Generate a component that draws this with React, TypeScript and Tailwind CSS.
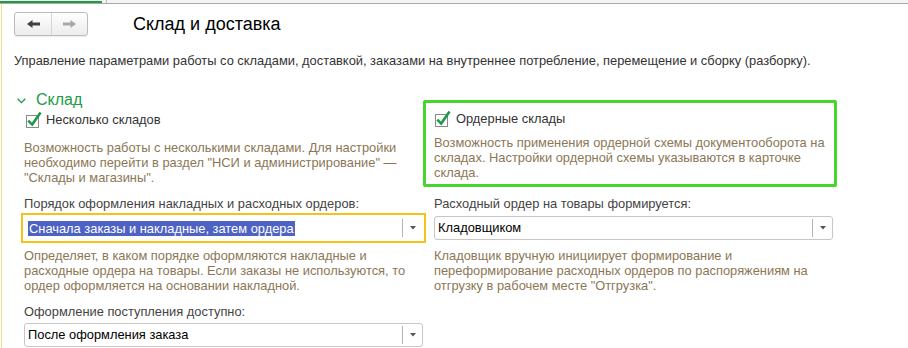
import React from "react";

const Arrow = ({ color, flip }: { color: string; flip?: boolean }) => (
  <svg width="13" height="8" viewBox="0 0 13 8" style={{ transform: flip ? "scaleX(-1)" : undefined }}>
    <path d="M0 4 L5.5 0 L5.5 2.5 L13 2.5 L13 5.5 L5.5 5.5 L5.5 8 Z" fill={color} />
  </svg>
);

const Check = () => (
  <svg width="16" height="17" viewBox="0 0 16 17" className="shrink-0">
    <rect x="0.5" y="3.5" width="12" height="12" fill="#fff" stroke="#8a8a8a" />
    <path d="M3.2 9.6 L6.2 12.6 L13.8 1.6" fill="none" stroke="#1a9a46" strokeWidth="2.6" strokeLinecap="square" />
  </svg>
);

const DropArrow = () => (
  <svg width="6" height="4" viewBox="0 0 6 4">
    <path d="M0 0 L6 0 L3 3.5 Z" fill="#555" />
  </svg>
);

const Field = ({ children, focused }: { children: React.ReactNode; focused?: boolean }) => {
  const inner = (
    <div
      className={
        "flex h-[24px] w-[399px] items-stretch rounded-[3px] border bg-white " +
        (focused ? "border-white" : "border-[#c6c6c6]")
      }
    >
      <div className="flex flex-1 items-center pl-[3px] text-black">{children}</div>
      <div className="my-[2px] w-px bg-[#b4b4b4]" />
      <div className="flex w-[19px] items-center justify-center">
        <DropArrow />
      </div>
    </div>
  );
  if (!focused) return inner;
  return <div className="-m-[3px] w-[405px] border-2 border-[#f5c21b] p-px">{inner}</div>;
};

const Desc = ({ lines }: { lines: string[] }) => (
  <div className="leading-[15px] text-[#8b7755] whitespace-nowrap">
    {lines.map((l, i) => (
      <div key={i}>{l}</div>
    ))}
  </div>
);

export default function App() {
  return (
    <div className="flex h-[348px] w-[908px] flex-col overflow-hidden bg-white font-['Liberation_Sans',Arial,sans-serif] text-[12.87px] text-[#333]">
      {/* top strip */}
      <div className="flex h-[4px] shrink-0 bg-[#f4f4f4] border-b border-[#a9a9a9]">
        <div className="h-[3px] w-[102px] border-b-2 border-[#1d9c44]" />
        <div className="ml-[4px] w-px bg-[#bdbdbd]" />
      </div>

      <div className="ml-[1px] flex flex-1 border-l border-[#f0dc8e]">
        <div className="flex-1 pl-[12px]">
          {/* header */}
          <div className="flex items-center pt-[8px]">
            <div className="flex h-[24px] w-[74px] rounded-[3px] border border-[#bcbcbc] bg-gradient-to-b from-white to-[#ececec] shadow-[0_1px_1px_rgba(0,0,0,0.08)]">
              <div className="flex w-[36px] items-center justify-center">
                <Arrow color="#404040" />
              </div>
              <div className="w-px bg-[#d6d6d6]" />
              <div className="flex flex-1 items-center justify-center">
                <Arrow color="#a8a8a8" flip />
              </div>
            </div>
            <div className="ml-[45px] text-[18px] leading-[22px] text-black">Склад и доставка</div>
          </div>

          <div className="mt-[17px] leading-[16px] text-[#333]">
            Управление параметрами работы со складами, доставкой, заказами на внутреннее потребление, перемещение и сборку (разборку).
          </div>

          {/* grid */}
          <div className="mt-[21px] grid grid-cols-[399px_399px] gap-x-[11px] pl-[10px]">
            {/* row 1 left */}
            <div>
              <div className="-ml-[7px] flex h-[20px] items-center">
                <svg width="9" height="6" viewBox="0 0 9 6" className="mt-[2px]">
                  <path d="M0.7 0.7 L4.5 4.6 L8.3 0.7" fill="none" stroke="#1a9c48" strokeWidth="1.3" />
                </svg>
                <span className="ml-[10px] text-[16px] leading-[20px] text-[#1a9c48]">Склад</span>
              </div>
              <div className="mt-[2px] flex h-[16px] items-center pl-[2px]">
                <Check />
                <span className="ml-[4px] text-[#333]">Несколько складов</span>
              </div>
              <div className="mt-[12px]">
                <Desc
                  lines={[
                    "Возможность работы с несколькими складами. Для настройки",
                    "необходимо перейти в раздел \"НСИ и администрирование\" —",
                    "\"Склады и магазины\".",
                  ]}
                />
              </div>
            </div>

            {/* row 1 right */}
            <div className="-ml-[11px] -mr-[4px] mt-[10px] h-[87px] rounded-[2px] border-[3px] border-[#45d62e] pl-[8px] pt-[8px]">
              <div className="flex h-[16px] items-center pl-[1px]">
                <Check />
                <span className="ml-[5px] text-[#333]">Ордерные склады</span>
              </div>
              <div className="mt-[8px]">
                <Desc
                  lines={[
                    "Возможность применения ордерной схемы документооборота на",
                    "складах. Настройки ордерной схемы указываются в карточке",
                    "склада.",
                  ]}
                />
              </div>
            </div>

            {/* row 2 left */}
            <div className="pt-[9px]">
              <div className="leading-[16px] text-[#444]">Порядок оформления накладных и расходных ордеров:</div>
              <div className="mt-[4px]">
                <Field focused>
                  <span className="bg-[#4e62c4] px-[1px] leading-[15px] text-white">
                    Сначала заказы и накладные, затем ордера
                  </span>
                </Field>
              </div>
              <div className="mt-[8px]">
                <Desc
                  lines={[
                    "Определяет, в каком порядке оформляются накладные и",
                    "расходные ордера на товары. Если заказы не используются, то",
                    "ордер оформляется на основании накладной.",
                  ]}
                />
              </div>
            </div>

            {/* row 2 right */}
            <div className="pt-[9px]">
              <div className="leading-[16px] text-[#444]">Расходный ордер на товары формируется:</div>
              <div className="mt-[4px]">
                <Field>Кладовщиком</Field>
              </div>
              <div className="mt-[8px]">
                <Desc
                  lines={[
                    "Кладовщик вручную инициирует формирование и",
                    "переформирование расходных ордеров по распоряжениям на",
                    "отгрузку в рабочем месте \"Отгрузка\".",
                  ]}
                />
              </div>
            </div>

            {/* row 3 left */}
            <div className="pt-[11px]">
              <div className="leading-[16px] text-[#444]">Оформление поступления доступно:</div>
              <div className="mt-[3px]">
                <Field>После оформления заказа</Field>
              </div>
            </div>
            <div />
          </div>
        </div>
      </div>
    </div>
  );
}
